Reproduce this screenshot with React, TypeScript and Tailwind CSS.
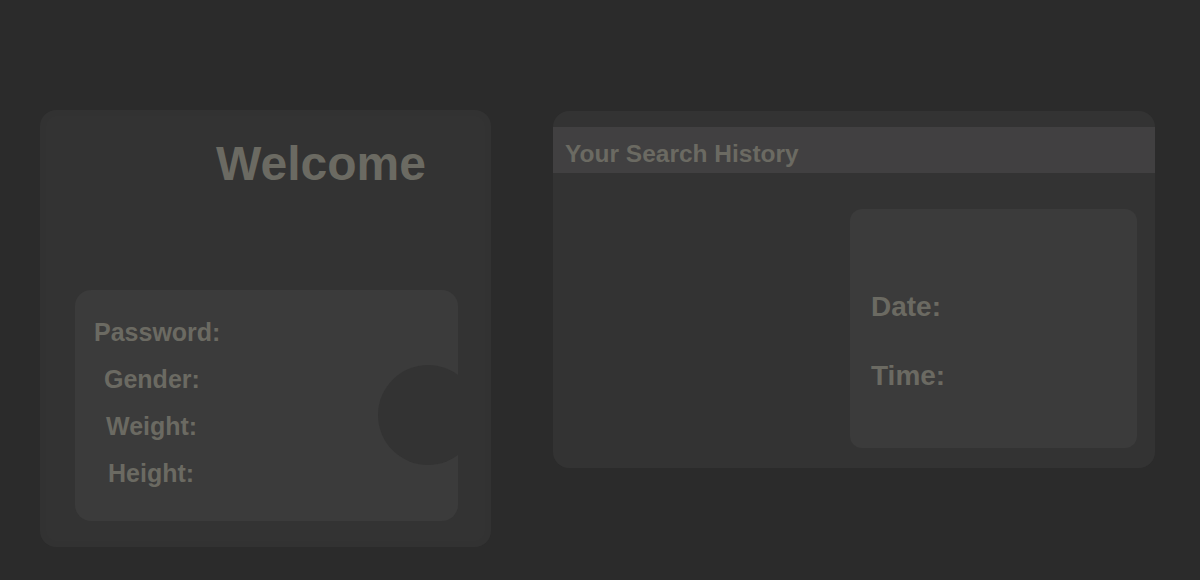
export default function App() {
  const font = { fontFamily: '"Liberation Sans", Arial, sans-serif' };
  return (
    <div className="w-[1200px] h-[580px] bg-[#2b2b2b] overflow-hidden" style={font}>
      <div className="flex items-start pt-[110px] pl-[40px] gap-[62px]">
        {/* Left panel */}
        <div className="w-[451px] h-[437px] bg-[#333333] rounded-[16px] flex flex-col shadow-[inset_0_0_10px_rgba(0,0,0,0.04)]">
          <h1 className="mt-[30px] pl-[176px] text-[48px] leading-none font-bold text-[#6b6a62]">Welcome</h1>
          <div className="relative mt-[102px] ml-[35px] w-[383px] h-[231px] bg-[#3b3b3b] rounded-[16px] overflow-hidden pt-[30px] flex flex-col gap-[22px] text-[25px] leading-none font-bold text-[#6b6a62]">
            <div className="absolute left-[303px] top-[75px] w-[100px] h-[100px] rounded-full bg-[#333333]" />
            <div className="pl-[19px]">Password:</div>
            <div className="pl-[29px]">Gender:</div>
            <div className="pl-[31px]">Weight:</div>
            <div className="pl-[33px]">Height:</div>
          </div>
        </div>
        {/* Right panel */}
        <div className="mt-[1px] w-[602px] h-[357px] bg-[#333333] rounded-[16px] pt-[16px] flex flex-col">
          <div className="h-[46px] bg-[#414041] pt-[15px] pl-[12px] text-[24.5px] leading-none font-bold text-[#6b6a62]">
            Your Search History
          </div>
          <div className="mt-[36px] ml-[297px] w-[287px] h-[239px] bg-[#3b3b3b] rounded-[12px] pt-[84px] pl-[21px] flex flex-col gap-[41px] text-[28px] leading-none font-bold text-[#6b6a62]">
            <div>Date:</div>
            <div>Time:</div>
          </div>
        </div>
      </div>
    </div>
  );
}
